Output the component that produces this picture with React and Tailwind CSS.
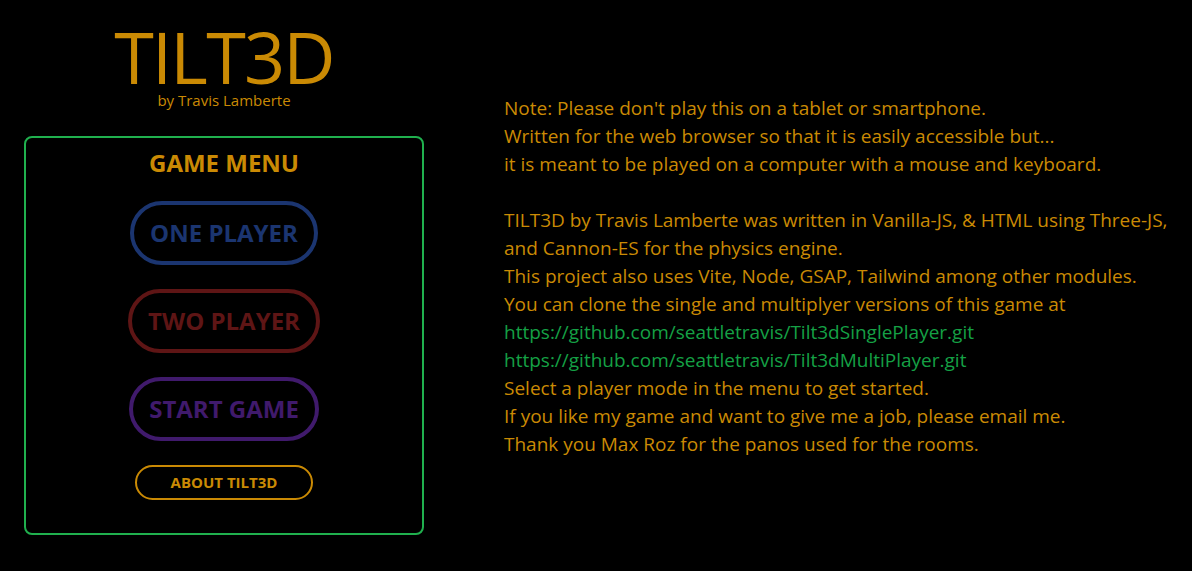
import React from 'react';

const font = { fontFamily: '"Open Sans", "Noto Sans", sans-serif' };

const MenuButton = ({ label, color }) => (
  <button className={`h-16 px-4 rounded-full border-4 bg-black text-2xl font-bold ${color}`}>
    {label}
  </button>
);

export default function App() {
  return (
    <div className="min-h-screen bg-black" style={font}>
      <div className="flex gap-20 pl-6">
        {/* left column: title + menu */}
        <div className="w-[400px] shrink-0 flex flex-col items-center">
          <h1 className="text-7xl text-[#ca8a04] leading-none pt-[20px] tracking-tight">TILT3D</h1>
          <p className="text-[15px] leading-4 text-[#ca8a04]">by Travis Lamberte</p>

          <div className="mt-[28px] w-full h-[399px] border-2 border-[#20b04e] rounded-lg flex flex-col items-center pt-[9px]">
            <h2 className="text-2xl font-bold text-[#ca8a04] leading-8">GAME MENU</h2>
            <div className="flex flex-col items-center gap-6 mt-[22px]">
              <MenuButton label="ONE PLAYER" color="border-[#1b3570] text-[#1b3570]" />
              <MenuButton label="TWO PLAYER" color="border-[#5e1515] text-[#5e1515]" />
              <MenuButton label="START GAME" color="border-[#401a6c] text-[#401a6c]" />
              <button className="w-[178px] h-[35px] rounded-full border-2 border-[#ca8a04] text-[#ca8a04] text-[15px] font-bold">
                ABOUT TILT3D
              </button>
            </div>
          </div>
        </div>

        {/* right column: notes */}
        <div className="pt-[94px] text-[19px] leading-7 text-[#ca8a04]">
          <p>Note: Please don't play this on a tablet or smartphone.</p>
          <p>Written for the web browser so that it is easily accessible but...</p>
          <p>it is meant to be played on a computer with a mouse and keyboard.</p>
          <br />
          <p>TILT3D by Travis Lamberte was written in Vanilla-JS, &amp; HTML using Three-JS,</p>
          <p>and Cannon-ES for the physics engine.</p>
          <p>This project also uses Vite, Node, GSAP, Tailwind among other modules.</p>
          <p>You can clone the single and multiplyer versions of this game at</p>
          <p className="text-[#15a045]">https://github.com/seattletravis/Tilt3dSinglePlayer.git</p>
          <p className="text-[#15a045]">https://github.com/seattletravis/Tilt3dMultiPlayer.git</p>
          <p>Select a player mode in the menu to get started.</p>
          <p>If you like my game and want to give me a job, please email me.</p>
          <p>Thank you Max Roz for the panos used for the rooms.</p>
        </div>
      </div>
    </div>
  );
}
